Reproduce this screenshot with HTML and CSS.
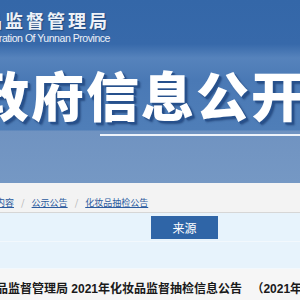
FILE: index.html
```html
<!DOCTYPE html>
<html lang="zh-CN">
<head>
    <meta charset="UTF-8">
    <meta name="viewport" content="width=device-width, initial-scale=1.0">
    <title>政府信息公开</title>
    <link rel="stylesheet" href="styles.css">
</head>
<body>
    <div class="header">
        <div class="brand">
            <div class="brand-cn">云南省药品监督管理局</div>
            <div class="brand-en">Medical Products Administration Of Yunnan Province</div>
        </div>
        <div class="banner-title">政府信息公开</div>
        <div class="banner-line"></div>
        <div class="banner-band"></div>
    </div>

    <div class="crumbs">
        <a href="#">信息公开内容</a>
        <span class="sep">/</span>
        <a href="#">公示公告</a>
        <span class="sep">/</span>
        <a href="#">化妆品抽检公告</a>
    </div>

    <div class="meta">
        <div class="meta-row">
            <span class="meta-label">来源</span>
        </div>
        <div class="meta-row meta-row-low"></div>
    </div>

    <div class="doc-title">云南省药品监督管理局 2021年化妆品监督抽检信息公告 <span class="doc-issue">（2021年第1期）</span></div>
</body>
</html>
```

FILE: styles.css
```css
body {
    margin: 0;
    padding: 0;
    font-family: "Noto Sans CJK SC", "Liberation Sans", sans-serif;
    background: #f6f6f6;
    overflow: hidden;
}
.header {
    height: 183px;
    background: linear-gradient(to bottom, #3467a8 0, #3769aa 44px, #5683bc 58px, #4a79b5 80px, #4f7eb8 130px, #7093c1 131px, #7598c4 183px);
    overflow: hidden;
}
.brand {
    width: 300px;
    margin-left: -190px;
    padding-top: 9px;
    text-align: right;
    color: #eef2f8;
}
.brand-cn {
    font-size: 18px;
    font-weight: 700;
    letter-spacing: 3px;
    line-height: 22px;
    text-shadow: 1px 1px 1px #21497e;
}
.brand-en {
    font-family: "Liberation Sans", sans-serif;
    font-size: 10.5px;
    letter-spacing: -0.45px;
    line-height: 13px;
    margin-top: 1px;
    white-space: nowrap;
}
.banner-title {
    margin-left: -24px;
    margin-top: 21px;
    font-size: 53px;
    font-weight: 900;
    line-height: 56px;
    letter-spacing: 2px;
    white-space: nowrap;
    color: #ffffff;
    text-shadow: 2px 2px 0 #26508c, 3px 3px 2px rgba(20, 50, 100, 0.6);
}
.banner-line {
    margin-left: 100px;
    margin-top: 12px;
    height: 2px;
    background: #eef3fa;
}
.banner-band {
    height: 51px;
}
.crumbs {
    height: 15px;
    padding-top: 14px;
    line-height: 12px;
    font-size: 9px;
    background: #f3f3f3;
    border-bottom: 1px solid #d6d6d6;
    white-space: nowrap;
    margin-left: -40px;
}
.crumbs a {
    color: #2c5b9e;
    text-decoration: underline;
}
.crumbs .sep {
    color: #b0b0b0;
    margin: 0 5px;
}
.meta {
    background: #e7f3fc;
}
.meta-row {
    height: 28px;
    display: flex;
    align-items: center;
    padding-left: 151px;
    border-bottom: 1px solid #f2f8fd;
}
.meta-row-low {
    height: 26px;
}
.meta-label {
    width: 67px;
    height: 23px;
    line-height: 23px;
    text-align: center;
    background: #2f65a7;
    color: #ffffff;
    font-size: 12px;
}
.doc-title {
    padding-top: 13px;
    line-height: 14px;
    margin-left: -52px;
    font-family: "Liberation Sans", "Noto Sans CJK SC", sans-serif;
    font-size: 12px;
    font-weight: 700;
    color: #1a1a1a;
    white-space: nowrap;
}
.doc-issue {
    margin-left: 6px;
}
```
